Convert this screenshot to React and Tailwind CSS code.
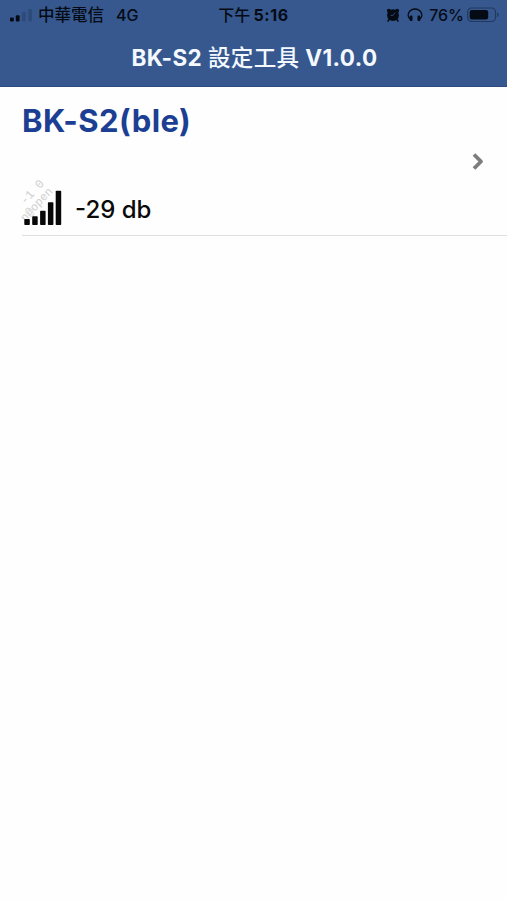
function CarrierSignal() {
  return (
    <svg className="w-[24px] h-[14px] shrink-0" viewBox="0 0 24 14" fill="#050b14">
      <rect x="1" y="9.5" width="3.8" height="4" rx="1" />
      <rect x="6.8" y="7.2" width="3.8" height="6.3" rx="1" />
      <rect x="13" y="4" width="3.6" height="9.5" rx="1" opacity="0.18" />
      <rect x="19.3" y="1" width="3.6" height="12.5" rx="1" opacity="0.18" />
    </svg>
  );
}

function AlarmIcon() {
  return (
    <svg className="w-[14px] h-[14px]" viewBox="0 0 14 14" fill="#050b14">
      <circle cx="7" cy="7.2" r="5.9" />
      <circle cx="2.9" cy="2.7" r="2" />
      <circle cx="11.1" cy="2.7" r="2" />
      <path d="M3.5 11 2 13M10.5 11 12 13" stroke="#050b14" strokeWidth="1.6" strokeLinecap="round" />
      <path d="M9 4.6 7 7.4H4.6" fill="none" stroke="#36588f" strokeWidth="0.8" />
    </svg>
  );
}

function HeadphoneIcon() {
  return (
    <svg className="w-[16px] h-[14px]" viewBox="0 0 16 14" fill="#050b14">
      <path
        d="M3.4 11.2C.9 9.6.7 6.5 2.1 4.2 3.3 2.2 5.4 1 8 1s4.7 1.2 5.9 3.2c1.4 2.3 1.2 5.4-1.3 7"
        fill="none"
        stroke="#050b14"
        strokeWidth="1.4"
      />
      <rect x="2.7" y="7.6" width="2.8" height="5.4" rx="1" />
      <rect x="10.5" y="7.6" width="2.8" height="5.4" rx="1" />
    </svg>
  );
}

function Battery() {
  return (
    <svg className="w-[34px] h-[16px]" viewBox="0 0 34 16">
      <rect x="0.7" y="1" width="27.8" height="13.5" rx="4" fill="none" stroke="#050b14" strokeOpacity="0.4" strokeWidth="1.2" />
      <rect x="2.7" y="3" width="18.5" height="9.5" rx="2.2" fill="#050b14" />
      <path d="M30.2 5.5c1.9.6 1.9 3.9 0 4.5z" fill="#050b14" opacity="0.45" />
    </svg>
  );
}

function StatusBar() {
  return (
    <div className="grid grid-cols-[1fr_auto_1fr] items-center h-[30px] text-[#050b14] leading-none font-medium">
      <div className="flex items-center pl-[9px]">
        <CarrierSignal />
        <span className="ml-[5px] text-[16.5px]">中華電信</span>
        <span className="ml-[12px] text-[16px]">4G</span>
      </div>
      <div className="flex items-center gap-[3px]">
        <span className="text-[16px]">下午</span>
        <span className="font-bold text-[16px] tracking-[0.6px]">5:16</span>
      </div>
      <div className="flex items-center justify-end pr-[6px]">
        <AlarmIcon />
        <span className="w-[7px]" />
        <HeadphoneIcon />
        <span className="ml-[6px] mr-[3px] text-[16px]">76%</span>
        <Battery />
      </div>
    </div>
  );
}

function SignalStrength() {
  return (
    <svg className="w-[42px] h-[46px] shrink-0 overflow-visible" viewBox="0 0 42 46">
      <g fill="#cfcfcf" fontFamily="Liberation Mono, monospace">
        <text fontSize="12" transform="translate(3 21) rotate(-47)">-1 0</text>
        <text fontSize="11.5" transform="translate(3 38) rotate(-47)">n@open</text>
      </g>
      <g fill="#080808">
        <rect x="2.3" y="35" width="5.5" height="6" rx="0.8" />
        <rect x="10.2" y="32.3" width="5.5" height="8.7" rx="0.8" />
        <rect x="18.1" y="26.7" width="5.5" height="14.3" rx="0.8" />
        <rect x="25.9" y="18.2" width="5.5" height="22.8" rx="0.8" />
        <rect x="33.7" y="6.7" width="5.5" height="34.3" rx="0.8" />
      </g>
    </svg>
  );
}

function DeviceRow({ name, rssi }) {
  return (
    <div className="ml-[22px] h-[149px] border-b border-[#dedede] flex items-center justify-between">
      <div className="h-full">
        <h2 className="pt-[15px] text-[31px] leading-[37px] font-bold tracking-[0.45px] text-[#1c3e93]">{name}</h2>
        <div className="mt-[45px] flex items-center">
          <SignalStrength />
          <span className="ml-[11px] pt-[6px] text-[24px] leading-none font-medium text-[#0a0a0a]">{rssi} db</span>
        </div>
      </div>
      <svg className="w-[14px] h-[20px] mr-[22px]" viewBox="0 0 14 20" fill="none">
        <path d="m3 3.5 7 7-7 7" stroke="#7d7d7d" strokeWidth="3.8" strokeLinejoin="round" />
      </svg>
    </div>
  );
}

export default function App() {
  return (
    <div className="min-h-screen bg-[#fefefe] overflow-hidden font-['Inter','Noto_Sans_CJK_TC',sans-serif]">
      <header className="h-[87px] bg-[#36588f] border-b border-[#2f4b80]">
        <StatusBar />
        <h1 className="pt-[12px] pl-[2px] text-center text-[22.5px] leading-[32px] font-bold tracking-[0.4px] text-[#f4f9ff]">
          BK-S2 <span className="font-medium text-[22.5px]">設定工具</span> V1.0.0
        </h1>
      </header>
      <DeviceRow name="BK-S2(ble)" rssi={-29} />
    </div>
  );
}
